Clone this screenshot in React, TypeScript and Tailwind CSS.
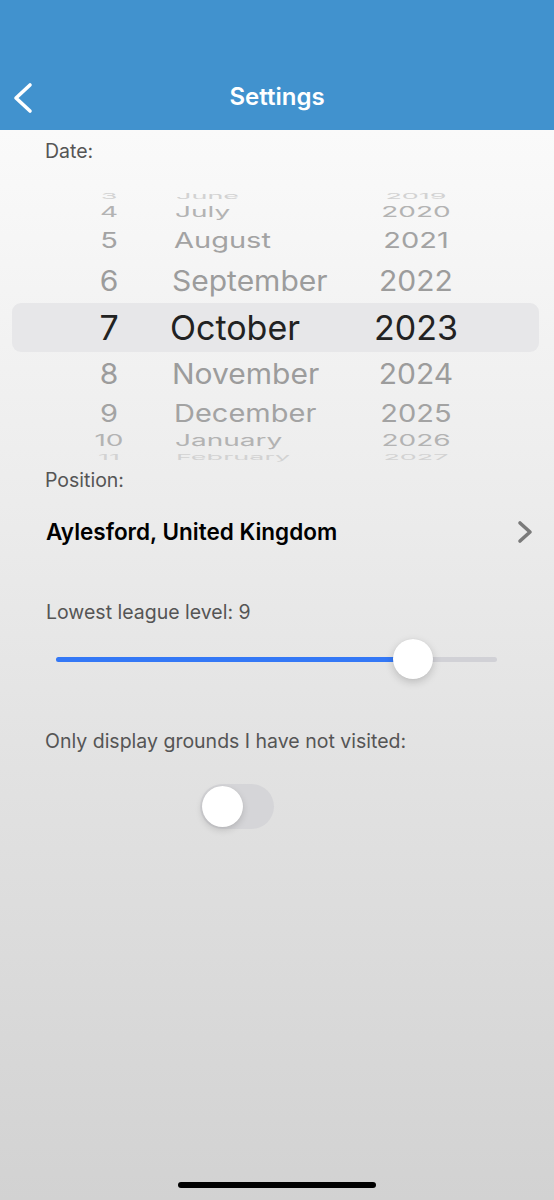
import React from "react";

type WheelRow = {
  day: string;
  month: string;
  year: string;
  h: number;
  scale: number;
  size: number;
  color: string;
  monthPad: number;
};

const rows: WheelRow[] = [
  { day: "3", month: "June", year: "2019", h: 12, scale: 0.3, size: 27, color: "#d2d2d2", monthPad: 34 },
  { day: "4", month: "July", year: "2020", h: 20, scale: 0.5, size: 28, color: "#b3b3b3", monthPad: 33 },
  { day: "5", month: "August", year: "2021", h: 37, scale: 0.74, size: 29, color: "#a3a3a3", monthPad: 32 },
  { day: "6", month: "September", year: "2022", h: 44, scale: 0.93, size: 30, color: "#9c9c9c", monthPad: 30 },
  { day: "7", month: "October", year: "2023", h: 49, scale: 1, size: 34, color: "#222222", monthPad: 28 },
  { day: "8", month: "November", year: "2024", h: 44, scale: 0.94, size: 30, color: "#9c9c9c", monthPad: 30 },
  { day: "9", month: "December", year: "2025", h: 35, scale: 0.84, size: 29, color: "#a3a3a3", monthPad: 32 },
  { day: "10", month: "January", year: "2026", h: 20, scale: 0.55, size: 28, color: "#b3b3b3", monthPad: 33 },
  { day: "11", month: "February", year: "2027", h: 12, scale: 0.3, size: 27, color: "#d2d2d2", monthPad: 34 },
];

const App = () => {
  return (
    <div
      className="flex h-[1200px] w-[554px] flex-col overflow-hidden bg-gradient-to-b from-[#ffffff] to-[#d2d2d2]"
      style={{ fontFamily: "Inter, 'Liberation Sans', sans-serif" }}
    >
      {/* Header */}
      <header className="h-[130px] shrink-0 bg-[#4192ce] pt-[75px]">
        <div className="relative flex h-11 items-center justify-center">
          <svg className="absolute left-[10px] top-[7px]" width="26" height="32" viewBox="0 0 26 32">
            <polyline
              points="20,3 6,16 20,29"
              fill="none"
              stroke="#ffffff"
              strokeWidth="3.6"
              strokeLinecap="round"
              strokeLinejoin="round"
            />
          </svg>
          <h1 className="text-[24px] font-semibold text-white">Settings</h1>
        </div>
      </header>

      {/* Date */}
      <p className="ml-[45px] mt-[9px] text-[19.5px] leading-6 text-[#555555]">Date:</p>

      {/* Date wheel */}
      <div className="mt-[27px] flex flex-col">
        {rows.map((r) => {
          const selected = r.day === "7";
          return (
            <div
              key={r.day}
              className={
                selected
                  ? "ml-3 mr-[15px] flex items-center overflow-hidden rounded-[9px] bg-[#e7e7e9]"
                  : "flex items-center overflow-hidden"
              }
              style={{ height: r.h }}
            >
              <div
                className="flex w-full items-center whitespace-nowrap leading-none"
                style={{
                  transform: `scaleY(${r.scale})`,
                  color: r.color,
                  fontSize: r.size,
                  paddingLeft: selected ? 64 : 76,
                }}
              >
                <span className="w-[66px] text-center">{r.day}</span>
                <span className="w-[192px]" style={{ paddingLeft: r.monthPad }}>
                  {r.month}
                </span>
                <span className="w-[164px] text-center">{r.year}</span>
              </div>
            </div>
          );
        })}
      </div>

      {/* Position */}
      <p className="ml-[45px] mt-[5px] text-[19.5px] leading-6 text-[#555555]">Position:</p>
      <div className="mt-6 flex h-8 items-center justify-between pl-[46px] pr-[20px]">
        <span className="text-[22.5px] font-semibold text-black">Aylesford, United Kingdom</span>
        <svg width="18" height="24" viewBox="0 0 18 24">
          <polyline
            points="4,3 14,12 4,21"
            fill="none"
            stroke="#7a7a7a"
            strokeWidth="3.6"
            strokeLinecap="round"
            strokeLinejoin="round"
          />
        </svg>
      </div>

      {/* League level slider */}
      <p className="ml-[46px] mt-[52px] text-[19.5px] leading-6 text-[#555555]">Lowest league level: 9</p>
      <div className="relative ml-[56px] mt-[15px] flex h-10 w-[441px] items-center">
        <div className="h-[5px] w-full rounded-full bg-[#d1d1d6]">
          <div className="h-full w-[357px] rounded-full bg-[#3478f6]" />
        </div>
        <div className="absolute left-[337px] top-0 h-10 w-10 rounded-full bg-white shadow-[0_3px_8px_rgba(0,0,0,0.18),0_0_1px_rgba(0,0,0,0.1)]" />
      </div>

      {/* Not visited toggle */}
      <p className="ml-[45px] mt-[50px] text-[19.5px] leading-6 text-[#555555]">
        Only display grounds I have not visited:
      </p>
      <div className="ml-[200px] mt-[31px] flex h-[45px] w-[74px] items-center rounded-full bg-[#d5d5d8] p-[2px]">
        <div className="h-[41px] w-[41px] rounded-full bg-white shadow-[0_3px_7px_rgba(0,0,0,0.15),0_0_1px_rgba(0,0,0,0.1)]" />
      </div>

      {/* Home indicator */}
      <div className="mb-[12px] mt-auto flex justify-center">
        <div className="ml-[-1px] h-[6px] w-[198px] rounded-full bg-black" />
      </div>
    </div>
  );
};

export default App;
